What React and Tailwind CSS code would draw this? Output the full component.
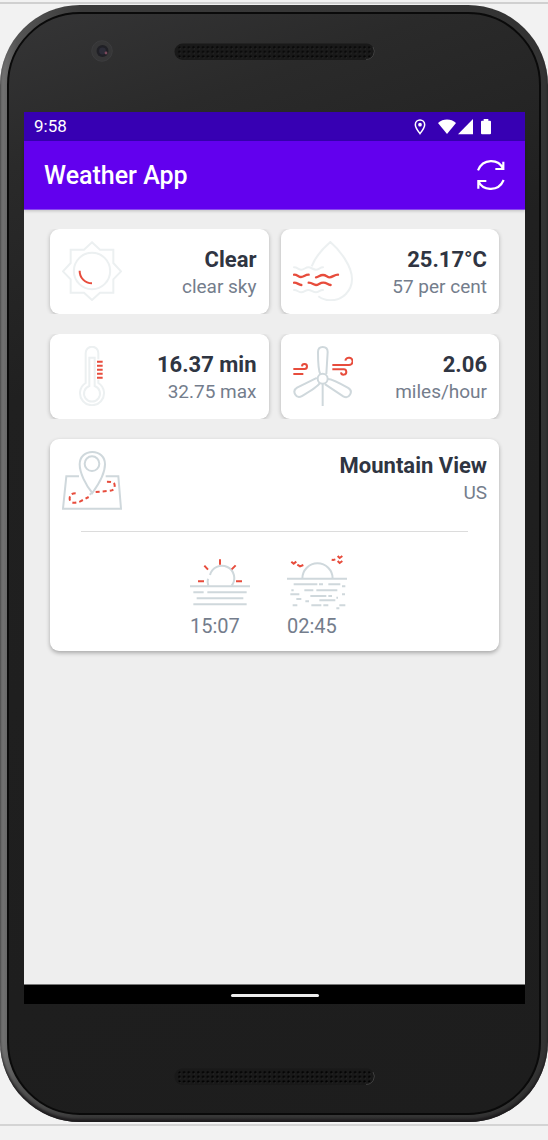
import React from "react";

const GREY = "#cfd8dc";
const PALE = "#ecf0f1";
const RED = "#e74c3c";

function Speaker({ id, dot }) {
  return (
    <svg viewBox="0 0 201 17" className="block h-[17px] w-[201px]" aria-hidden="true">
      <defs>
        <pattern id={id} x="3" y="2" width="4.75" height="4.6" patternUnits="userSpaceOnUse">
          <circle cx="2.3" cy="2.3" r="1.15" fill={dot} />
          <rect x="2.4" y="3.3" width="1.4" height="0.7" fill="#343434" />
        </pattern>
      </defs>
      <rect x="0.5" y="0.5" width="200" height="16.4" rx="8.2" fill="#191919" />
      <path d="M192 16.4 A8 8 0 0 0 199 4" fill="none" stroke="#4a4a4a" strokeWidth="0.8" />
      <rect x="3" y="2" width="195" height="13.6" rx="6" fill={`url(#${id})`} />
    </svg>
  );
}

function Camera() {
  return (
    <svg viewBox="0 0 22 22" className="ml-1.5 size-[22px] justify-self-center" aria-hidden="true">
      <circle cx="11" cy="11" r="10.3" fill="#363637" stroke="#3f3f41" strokeWidth="0.8" />
      <circle cx="11.5" cy="11" r="6" fill="#202026" />
      <circle cx="11.5" cy="11" r="3.4" fill="#2c2c38" />
      <circle cx="15" cy="13" r="1.4" fill="#7a4a5c" />
    </svg>
  );
}

function Icon({ children, color = PALE }) {
  return (
    <svg
      viewBox="0 0 180 180"
      className="size-[60px] shrink-0"
      fill="none"
      stroke={color}
      strokeWidth="6"
      aria-hidden="true"
    >
      {children}
    </svg>
  );
}

function SunIcon() {
  return (
    <Icon>
      <path d="M90 4 L114 26 H154 V66 L177 91 L154 115 V155 H114 L90 177 L66 155 H26 V115 L3 91 L26 66 V26 H66 Z" />
      <circle cx="90" cy="90" r="54.5" />
      <path d="M53 89 A37 37 0 0 0 90 127" stroke={RED} />
    </Icon>
  );
}

function HumidityIcon() {
  return (
    <Icon>
      <path d="M56 76 C66 50 90 22 112 3 C140 27 177 75 177 114 C177 150 148 178 112 178 C98 178 86 174 76 166" />
      <g strokeLinecap="round">
        <path d="M3 79 C14 79 16 86 25 86 S37 79 46 79 S60 86 69 86 S80 79 90 79" />
        <path d="M3 147 C14 147 16 154 25 154 S37 147 46 147 S60 154 69 154 S80 147 90 147" />
        <g stroke={RED} strokeWidth="7">
          <path d="M3 101 C14 101 16 108 24 108 S36 101 47 101" />
          <path d="M69 109 C77 108 80 102 90 102 S102 109 110 109 S124 101 135 101" />
          <path d="M3 125 C14 125 16 131 25 132" />
          <path d="M47 125 C59 125 61 132 69 132 S80 125 91 125 S103 131 113 132" />
        </g>
      </g>
    </Icon>
  );
}

function ThermometerIcon() {
  return (
    <Icon>
      <path d="M109 40 V21 A19 19 0 0 0 71 21 V111 A36 36 0 1 0 109 111 V101" />
      <path d="M82 120 V35 H98 V120 A24 24 0 1 1 82 120 Z" />
      <path d="M105 47 H122 M105 59 H122 M105 71 H122 M105 83 H122 M105 95 H122" stroke={RED} />
    </Icon>
  );
}

function WindIcon() {
  const blade = "M82 84 C76 74 75 50 75 18 C75 8 80 3 89 3 C98 3 104 8 104 18 L100 84";
  return (
    <Icon color={GREY}>
      <path d={blade} />
      <path d={blade} transform="rotate(120 89 98)" />
      <path d={blade} transform="rotate(240 89 98)" />
      <circle cx="89" cy="98" r="15" />
      <path d="M89 113 V181" />
      <g stroke={RED}>
        <path d="M118 57 H167 A11 11 0 1 0 157 44" />
        <path d="M118 70 H151 A8 8 0 1 1 144 79" />
        <path d="M1 69 H34 A7.5 7.5 0 1 0 27 61" />
        <path d="M1 84 H31" />
      </g>
    </Icon>
  );
}

function MapIcon() {
  return (
    <Icon color={GREY}>
      <path d="M51 76 H13 L3 173 H177 L169 76 H131" />
      <path d="M91 126 C70 100 53 65 53 40 C53 17 70 3 91 3 C112 3 129 17 129 40 C129 65 110 100 91 126 Z" />
      <circle cx="90" cy="38" r="22" />
      <path d="M83 131 L92 124" />
      <g stroke={RED}>
        <path d="M41 127 C28 127 23 133 23 143 C23 155 36 159 55 151 L80 138" strokeDasharray="12 9" />
        <path d="M101 123 L138 120 C155 119 158 113 158 103 C158 94 150 92 134 92" strokeDasharray="12 9" />
      </g>
    </Icon>
  );
}

function SunriseIcon() {
  return (
    <Icon color={GREY}>
      <path d="M0 103 H180 M10 121 H41 M52 121 H170 M20 139 H160 M10 157 H170" />
      <path d="M55 101 C52 93 52 87 54 80 M60 69 A37 37 0 1 1 125 101" />
      <path d="M90 22 V38 M43 41 L54 53 M137 40 L125 52 M24 88 H42 M138 88 H156" stroke={RED} />
    </Icon>
  );
}

function SunsetIcon() {
  return (
    <Icon color={GREY}>
      <path d="M0 80 H180 M46 80 A45.5 46 0 0 1 137 80" />
      <path d="M20 97 H91 M96 97 H108 M124 97 H160 M165 103 H175 M13 115 H20 M52 115 H79 M88 115 H151 M10 127 H37 M70 132 H118 M124 132 H135 M165 127 H174 M28 141 H43 M148 137 H153 M97 145 H145 M55 148 H66 M17 160 H31 M73 160 H103 M109 160 H124 M157 160 H175 M148 169 H157" />
      <path
        d="M13 29 L20 35 L28 29 M31 38 L39 43 L49 39 M134 23 L139 24 L145 22 M152 12 L158 18 L166 12 M152 27 L158 33 L166 27"
        stroke={RED}
      />
    </Icon>
  );
}

function StatusIcons() {
  return (
    <div className="flex items-center text-white">
      <svg viewBox="0 0 36 48" className="mr-3 h-4 w-3" fill="none" stroke="currentColor" aria-hidden="true">
        <path d="M18 44 C12 36 4 26 4 17 A14 14 0 0 1 32 17 C32 26 24 36 18 44 Z" strokeWidth="4.5" />
        <circle cx="18" cy="17" r="5.5" fill="currentColor" stroke="none" />
      </svg>
      <svg viewBox="0 0 54 48" className="mr-0.5 h-4 w-[18px]" fill="currentColor" aria-hidden="true">
        <path d="M27 45 L0 12 C15 -2 39 -2 54 12 Z" />
      </svg>
      <svg viewBox="0 0 45 48" className="mr-2 h-4 w-[15px]" fill="currentColor" aria-hidden="true">
        <path d="M45 0 V46 H0 Z" />
      </svg>
      <svg viewBox="0 0 30 48" className="h-4 w-2.5" fill="currentColor" aria-hidden="true">
        <path d="M8 0 H22 V5 H27 Q30 5 30 8 V43 Q30 46 27 46 H3 Q0 46 0 43 V8 Q0 5 3 5 H8 Z" />
      </svg>
    </div>
  );
}

function RefreshIcon() {
  return (
    <svg viewBox="0 0 84 90" className="h-[30px] w-7" fill="none" stroke="currentColor" strokeWidth="6.5" aria-hidden="true">
      <path d="M3 31 C18 -5 64 -5 79 27 M79 5 V27 H55" />
      <path d="M80 60 C65 95 19 95 4 64 M4 86 V63 H28" />
    </svg>
  );
}

function Reading({ title, detail }) {
  return (
    <div className="min-w-0 flex-1 pt-0.5 text-right">
      <h2 className="text-[22px] leading-[26px] font-bold text-[#2f3542]">{title}</h2>
      <p className="text-[19px] leading-7 text-[#747d8c]">{detail}</p>
    </div>
  );
}

function WeatherCard({ icon, title, detail }) {
  return (
    <article className="flex min-w-0 items-end rounded-[9px] bg-white px-3 pt-3 pb-[13px] shadow-[0_1px_4px_rgba(0,0,0,0.25)]">
      {icon}
      <Reading title={title} detail={detail} />
    </article>
  );
}

function SunTime({ icon, time }) {
  return (
    <div className="w-[60px]">
      {icon}
      <time className="block text-[20px] leading-7 text-[#747d8c]">{time}</time>
    </div>
  );
}

const readings = [
  [
    { icon: <SunIcon />, title: "Clear", detail: "clear sky" },
    { icon: <HumidityIcon />, title: "25.17°C", detail: "57 per cent" },
  ],
  [
    { icon: <ThermometerIcon />, title: "16.37 min", detail: "32.75 max" },
    { icon: <WindIcon />, title: "2.06", detail: "miles/hour" },
  ],
];

function Screen() {
  return (
    <div className="flex flex-1 flex-col bg-[#eeeeee]">
      <div className="flex h-[29px] items-center justify-between bg-[#3700b3] pt-px pr-[34px] pl-[10px] text-[17px] text-white">
        <time>9:58</time>
        <StatusIcons />
      </div>
      <header className="flex h-[69px] items-center justify-between border-b border-[#8a4bee] bg-[#6200ee] px-5 text-white shadow-[0_1px_3px_rgba(0,0,0,0.2)]">
        <h1 className="pt-0.5 text-[25px] font-medium">Weather App</h1>
        <button type="button" aria-label="Refresh" className="block">
          <RefreshIcon />
        </button>
      </header>

      <main className="flex flex-1 flex-col gap-5 pt-[19px]">
        {readings.map((row, i) => (
          <section key={i} className="grid grid-cols-2 gap-3 overflow-hidden px-[26px]">
            {row.map((item) => (
              <WeatherCard key={item.title} {...item} />
            ))}
          </section>
        ))}

        <article className="mx-[26px] rounded-[9px] bg-white pb-[11px] shadow-[0_2px_4px_rgba(0,0,0,0.3)]">
          <div className="flex items-start px-3 pt-3">
            <MapIcon />
            <Reading title="Mountain View" detail="US" />
          </div>
          <hr className="mx-[31px] mt-5 border-[#dcdcdc]" />
          <div className="mt-5 flex justify-center gap-[37px] pr-3">
            <SunTime icon={<SunriseIcon />} time="15:07" />
            <SunTime icon={<SunsetIcon />} time="02:45" />
          </div>
        </article>
      </main>

      <nav className="flex h-5 items-center justify-center border-t border-[#777] bg-black pt-0.5" aria-label="System">
        <button type="button" aria-label="Home" className="h-[3px] w-[88px] rounded-sm bg-[#eeeeee]" />
      </nav>
    </div>
  );
}

export default function App() {
  return (
    <div className="flex min-h-screen flex-col bg-[#f2f2f2] font-[Roboto,sans-serif]">
      <div className="mt-0.5 mb-px h-0.5 bg-[#d0d0d0]" />
      <div className="flex flex-1 flex-col rounded-[80px] bg-[linear-gradient(to_right,#777_0%,#555_3%,#3a3a3a_15%,#333_100%)] p-[7px] shadow-[inset_0_-3px_3px_#1c1a1c]">
        <div className="flex flex-1 flex-col rounded-[73px] border-2 border-[#0a0a0a] bg-[linear-gradient(160deg,#353536_0%,#2a2a2a_12%,#202020_30%,#1d1d1d_100%)] pr-[14px] pl-[15px]">
          <div className="grid h-[98px] grid-cols-[1fr_auto_1fr] content-start items-center pt-[26px]">
            <Camera />
            <Speaker id="earpiece" dot="#050505" />
          </div>
          <Screen />
          <div className="flex h-[109px] justify-center pt-16">
            <Speaker id="loudspeaker" dot="#000000" />
          </div>
        </div>
      </div>
      <div className="mt-0.5 mb-[14px] h-0.5 bg-[#d4d4d4]" />
    </div>
  );
}
